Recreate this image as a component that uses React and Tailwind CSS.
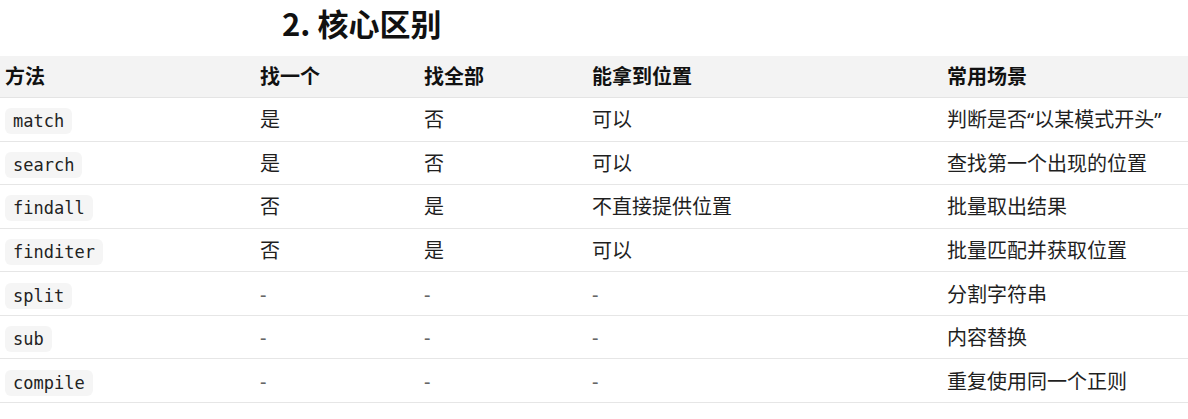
import React from "react";

const rows = [
  ["match", "是", "否", "可以", "判断是否“以某模式开头”"],
  ["search", "是", "否", "可以", "查找第一个出现的位置"],
  ["findall", "否", "是", "不直接提供位置", "批量取出结果"],
  ["finditer", "否", "是", "可以", "批量匹配并获取位置"],
  ["split", "-", "-", "-", "分割字符串"],
  ["sub", "-", "-", "-", "内容替换"],
  ["compile", "-", "-", "-", "重复使用同一个正则"],
];

const headers = ["方法", "找一个", "找全部", "能拿到位置", "常用场景"];

const cols = "grid grid-cols-[255px_164px_168px_355px_1fr]";

const App = () => {
  return (
    <div
      className="w-[1188px] h-[419px] bg-white text-[#1f1f1f] overflow-hidden"
      style={{ fontFamily: '"Noto Sans", "Noto Sans CJK SC", sans-serif' }}
    >
      {/* Title */}
      <h2
        className="h-[56px] pl-[282px] text-[31px] font-bold leading-[46px] text-[#111]"
        style={{ fontFamily: '"Noto Sans CJK SC", sans-serif' }}
      >
        2. 核心区别
      </h2>

      {/* Table */}
      <div>
        <div className={`${cols} h-[42px] bg-[#f3f3f3] border-b border-[#e4e4e4] items-center`}>
          {headers.map((h) => (
            <div key={h} className="pl-[5px] text-[20px] font-bold text-[#111]">
              {h}
            </div>
          ))}
        </div>

        {rows.map((r) => (
          <div
            key={r[0]}
            className={`${cols} h-[43.57px] border-b border-[#e6e6e6] items-center pt-[2px] text-[20px]`}
          >
            <div className="pl-[5px]">
              <code
                className="inline-block h-[26px] px-[8px] rounded-[6px] bg-[#f5f5f5] text-[17px] leading-[26px] text-[#222]"
                style={{ fontFamily: '"DejaVu Sans Mono", monospace' }}
              >
                {r[0]}
              </code>
            </div>
            {r.slice(1).map((c, i) => (
              <div key={i} className={`pl-[5px] ${c === "-" ? "text-[#666]" : ""}`}>
                {c}
              </div>
            ))}
          </div>
        ))}
      </div>
    </div>
  );
};

export default App;
